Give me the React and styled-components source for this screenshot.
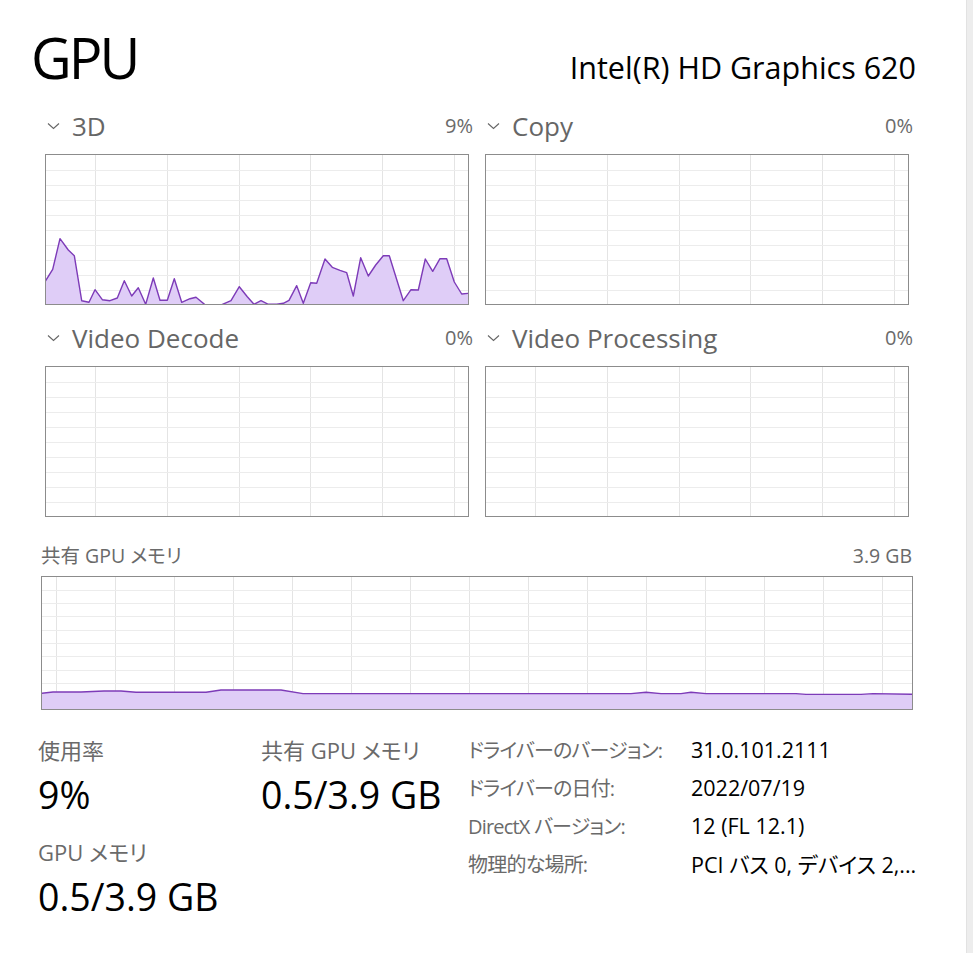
import styled, { createGlobalStyle } from 'styled-components';

const GlobalStyle = createGlobalStyle`
  html, body {
    margin: 0;
    background: #fff;
  }
  body {
    font-family: "Open Sans", "Noto Sans CJK JP", sans-serif;
    font-feature-settings: "palt";
    color: #000;
  }
`;

// graph samples, in pixels of the 424x151 box
const load3d = [
  [0, 127.7], [7.7, 115.3], [15, 84.7], [23.3, 96], [29.3, 101.7], [36.7, 146.7], [44, 148.3],
  [50, 135.7], [57.3, 145.7], [65, 146.7], [72.3, 144], [79.3, 126.7], [86.7, 142], [93.3, 133.7],
  [100.7, 150.3], [108.3, 124], [115, 146.3], [122.3, 146.3], [129.3, 124.7], [136.7, 148.3],
  [145, 144.7], [151, 143.3], [160, 150.7], [168.3, 151.3], [176.7, 150.7], [186, 146.7],
  [194.3, 132.7], [202.3, 142.7], [209, 150.3], [216, 146.7], [223.3, 150.3], [231.7, 150.3],
  [238.3, 149.3], [244, 146.3], [251.7, 131.7], [258.3, 149.3], [265.7, 128.7], [271.7, 129.3],
  [280, 105], [287.3, 113.3], [295, 116.3], [301.7, 118.7], [308.3, 142], [315.7, 103.7],
  [323.3, 122], [330.7, 111], [338.3, 101.7], [344.3, 101.7], [358.3, 146.7], [366, 135.7],
  [373.3, 136], [380.3, 105], [387.7, 117.3], [395, 104.7], [401.7, 104.7], [409.3, 128],
  [416.7, 140], [423.7, 139.3],
];

const sharedMem = [
  [0, 117.3], [12, 116], [40, 116], [63, 115], [80, 115], [95, 116.3], [165, 116.3],
  [180, 114], [240, 114], [262, 117.6], [590, 117.6], [605, 116.3], [620, 117.6],
  [640, 117.6], [650, 116.3], [665, 117.6], [755, 117.6], [765, 118.4], [820, 118.4],
  [832, 117.6], [870, 118.2], [872, 118.4],
];

const engineGrid = {
  v: [50.5, 122.5, 194.5, 265.5, 337.5, 409.5],
  h: [1, 2, 3, 4, 5, 6, 7, 8, 9].map((k) => 1 + k * 15),
};

const memGrid = {
  v: Array.from({ length: 15 }, (_, k) => 15.5 + k * 59),
  h: [1, 2, 3, 4, 5, 6, 7, 8, 9].map((k) => 1 + k * 13.3),
};

const engines = [
  { name: '3D', value: '9%', data: load3d },
  { name: 'Copy', value: '0%' },
  { name: 'Video Decode', value: '0%' },
  { name: 'Video Processing', value: '0%' },
];

const details = [
  ['ドライバーのバージョン:', '31.0.101.2111'],
  ['ドライバーの日付:', '2022/07/19'],
  ['DirectX バージョン:', '12 (FL 12.1)'],
  ['物理的な場所:', 'PCI バス 0, デバイス 2,...'],
];

const Chart = ({ w, h, grid, data }) => {
  let fill = null;
  let line = null;
  if (data) {
    const pts = data.map(([x, y]) => `${x},${y}`).join(' ');
    line = pts;
    fill = `${data[0][0]},${h} ${pts} ${data[data.length - 1][0]},${h}`;
  }
  return (
    <ChartBox $h={h}>
      <svg viewBox={`1 1 ${w - 2} ${h - 2}`} preserveAspectRatio="none">
        {grid.v.map((x) => (
          <line key={'v' + x} x1={x} x2={x} y1={0} y2={h} stroke="#e4e4e4" strokeWidth="1" shapeRendering="crispEdges" />
        ))}
        {grid.h.map((y) => (
          <line key={'h' + y} x1={0} x2={w} y1={y} y2={y} stroke="#ececec" strokeWidth="1" shapeRendering="crispEdges" />
        ))}
        {fill && <polygon points={fill} fill="#dfcdf7" />}
        {line && <polyline points={line} fill="none" stroke="#7d3bb8" strokeWidth="1.4" strokeLinejoin="round" />}
      </svg>
    </ChartBox>
  );
};

const Chevron = () => (
  <svg width="13" height="8" viewBox="0 0 13 8">
    <polyline points="1,1.5 6.5,6.5 12,1.5" fill="none" stroke="#666" strokeWidth="1.1" />
  </svg>
);

export default function App() {
  return (
    <>
      <GlobalStyle />
      <Page>
        <Content>
          <Header>
            <Title>GPU</Title>
            <DeviceName>Intel(R) HD Graphics 620</DeviceName>
          </Header>

          <EngineGrid>
            {engines.map((e) => (
              <Engine key={e.name}>
                <EngineHead>
                  <Chevron />
                  <EngineName>{e.name}</EngineName>
                  <Percent>{e.value}</Percent>
                </EngineHead>
                <Chart w={424} h={151} grid={engineGrid} data={e.data} />
              </Engine>
            ))}
          </EngineGrid>

          <Memory>
            <MemoryHead>
              <span>共有 GPU メモリ</span>
              <span>3.9 GB</span>
            </MemoryHead>
            <Chart w={872} h={134} grid={memGrid} data={sharedMem} />
          </Memory>

          <Stats>
            <StatColumn>
              <Stat>
                <StatLabel>使用率</StatLabel>
                <StatValue>9%</StatValue>
              </Stat>
              <Stat $gap>
                <StatLabel>GPU メモリ</StatLabel>
                <StatValue>0.5/3.9 GB</StatValue>
              </Stat>
            </StatColumn>
            <StatColumn>
              <Stat>
                <StatLabel>共有 GPU メモリ</StatLabel>
                <StatValue>0.5/3.9 GB</StatValue>
              </Stat>
            </StatColumn>
            <Details>
              {details.map(([k, v]) => (
                <DetailRow key={k}>
                  <DetailKey>{k}</DetailKey>
                  <DetailValue>{v}</DetailValue>
                </DetailRow>
              ))}
            </Details>
          </Stats>
        </Content>
        <ScrollTrack />
      </Page>
    </>
  );
}

const Page = styled.div`
  display: flex;
  min-height: 953px;
`;

const Content = styled.main`
  flex: 1;
  padding: 28px 53px 0 38px;
  min-width: 0;
`;

const ScrollTrack = styled.div`
  width: 6px;
  background: #ededed;
  border-left: 1px solid #e2e2e2;
`;

const Header = styled.header`
  display: flex;
  justify-content: space-between;
  align-items: baseline;
  margin-left: -7px;
  margin-right: -3px;
`;

const Title = styled.h1`
  margin: 0;
  font-size: 56px;
  font-weight: 400;
  line-height: 58px;
  letter-spacing: -3px;
`;

const DeviceName = styled.div`
  font-size: 30.5px;
  line-height: 34px;
`;

const EngineGrid = styled.section`
  display: grid;
  grid-template-columns: 424px 424px;
  column-gap: 16px;
  row-gap: 17px;
  margin: 24px 0 0 7px;
`;

const Engine = styled.div`
  display: flex;
  flex-direction: column;
`;

const EngineHead = styled.div`
  display: flex;
  align-items: center;
  height: 32px;
  margin: 0 -4px 12px 2px;
  color: #666;
  svg {
    flex: none;
  }
`;

const EngineName = styled.span`
  margin-left: 12px;
  font-size: 26px;
  line-height: 32px;
`;

const Percent = styled.span`
  margin-left: auto;
  font-size: 20px;
  line-height: 32px;
  color: #6a6a6a;
`;

const ChartBox = styled.div`
  height: ${(p) => p.$h}px;
  box-sizing: border-box;
  border: 1px solid #8c8c8c;
  background: #fff;
  svg {
    display: block;
    width: 100%;
    height: 100%;
  }
`;

const Memory = styled.section`
  margin: 27px 0 0 3px;
`;

const MemoryHead = styled.div`
  display: flex;
  justify-content: space-between;
  font-size: 19.5px;
  line-height: 24px;
  color: #6a6a6a;
  margin: 0 1px 8px 0;
`;

const Stats = styled.section`
  display: grid;
  grid-template-columns: 223px 207px 1fr;
  margin-top: 26px;
`;

const StatColumn = styled.div`
  display: flex;
  flex-direction: column;
`;

const Stat = styled.div`
  display: flex;
  flex-direction: column;
  margin-top: ${(p) => (p.$gap ? '21px' : '0')};
`;

const StatLabel = styled.div`
  font-size: 22px;
  line-height: 28px;
  color: #6a6a6a;
`;

const StatValue = styled.div`
  margin-top: 9px;
  font-size: 37.5px;
  line-height: 44px;
  color: #000;
`;

const Details = styled.div`
  display: flex;
  flex-direction: column;
`;

const DetailRow = styled.div`
  display: grid;
  grid-template-columns: 223px 1fr;
  height: 38px;
  align-items: center;
  &:first-child {
    margin-top: -6px;
  }
`;

const DetailKey = styled.span`
  font-size: 20px;
  letter-spacing: -0.8px;
  color: #6a6a6a;
  white-space: nowrap;
`;

const DetailValue = styled.span`
  font-size: 21.5px;
  color: #000;
  white-space: nowrap;
`;
